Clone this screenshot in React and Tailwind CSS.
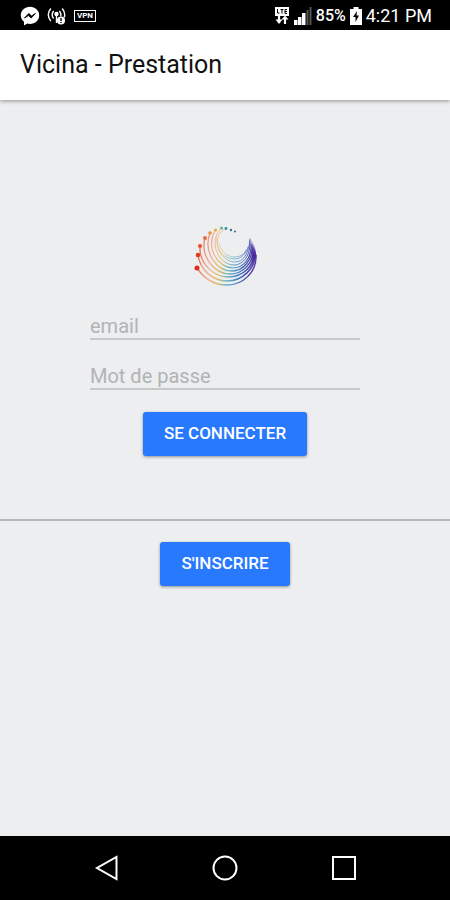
/**
 * Vicina - Prestation: login screen.
 */

// Each strand starts at a drop-shaped head and sweeps under the logo to the right.
const STRANDS = [
  { head: [12, 50, 2.5], d: 'M12 50 C20 62 30 67 42 67 C58 67 72 54 71 37', color: '#dc2f1c', width: 1.4 },
  { head: [13, 37, 2.3], d: 'M13 37 C15 52 28 63 42 63 C57 63 71 51 70 34', color: '#e03c22', width: 1.4 },
  { head: [15, 28, 2.1], d: 'M15 28 C14 45 28 59 43 59 C58 59 70 48 69 32', color: '#e5532f', width: 1.4 },
  { head: [20, 20, 2], d: 'M20 20 C15 38 29 56 45 56 C58 56 69 45 68 30', color: '#e86c3c', width: 1.3 },
  { head: [25, 15, 1.8], d: 'M25 15 C18 34 31 53 47 53 C58 53 68 42 67 28', color: '#ea903a', width: 1.3 },
  { head: [30.5, 12, 1.6], d: 'M30.5 12 C20 30 33 50 48 50 C58 50 67 40 66 26', color: '#ecac3e', width: 1.2 },
  { head: [36.5, 10, 1.5], d: 'M36.5 10 C22 24 34 47 49 47 C58 47 66 37 65 23', color: '#6fae90', width: 1 },
  { head: [41, 10.5, 1.4], d: 'M41 10.5 C24 18 34 44 50 44 C58 44 64 36 65 21', color: '#2f92a8', width: 0.8 },
  { head: [46, 12, 1.2], d: 'M32 20 C31 32 38 41 50 41 C56 41 62 35 63 29', color: '#2f7694', width: 0.7 },
  { head: [50, 13.5, 1], d: 'M34 25 C36 34 42 39 50 39 C56 39 60 35 61 32', color: '#36607c', width: 0.6 },
];

function Logo() {
  return (
    <svg width="80" height="76" viewBox="0 0 80 76" fill="none" role="img" aria-label="Vicina">
      <defs>
        <linearGradient id="strand" gradientUnits="userSpaceOnUse" x1="12" y1="34" x2="71" y2="44">
          <stop offset="0" stopColor="#e8643c" />
          <stop offset="0.12" stopColor="#ee8f78" />
          <stop offset="0.26" stopColor="#f2b394" />
          <stop offset="0.42" stopColor="#e6bd62" />
          <stop offset="0.56" stopColor="#6ab9bf" />
          <stop offset="0.72" stopColor="#4687c4" />
          <stop offset="0.9" stopColor="#4b3fa5" />
          <stop offset="1" stopColor="#5b2f9c" />
        </linearGradient>
        <linearGradient id="edge" gradientUnits="userSpaceOnUse" x1="64" y1="18" x2="62" y2="58">
          <stop offset="0" stopColor="#5b4fb0" stopOpacity="0" />
          <stop offset="0.5" stopColor="#47259c" />
          <stop offset="1" stopColor="#4a8fd0" stopOpacity="0" />
        </linearGradient>
      </defs>
      {STRANDS.map((strand) => (
        <g key={strand.d}>
          <path d={strand.d} stroke="url(#strand)" strokeWidth={strand.width} strokeLinecap="round" />
          <circle cx={strand.head[0]} cy={strand.head[1]} r={strand.head[2]} fill={strand.color} />
        </g>
      ))}
      <path d="M65 20 C73 31 74 44 62 57 C68 45 68 32 65 20Z" fill="url(#edge)" />
    </svg>
  );
}

function MessengerIcon() {
  return (
    <svg width="20" height="20" viewBox="0 0 20 20" aria-hidden="true">
      <path d="M10 .8C4.8.8.8 4.5.8 9.3c0 2.7 1.2 5 3.2 6.5V19.5l3.2-1.9c.9.2 1.8.4 2.800.4 5.2 0 9.2-3.8 9.2-8.7S15.2.8 10 .8Z" fill="#fff" />
      <path d="m4.5 12 4.3-4.6 2.7 2.5 4-2.5-4.3 4.7-2.7-2.5Z" fill="#000" stroke="#000" strokeWidth=".8" />
    </svg>
  );
}

function HotspotIcon() {
  return (
    <svg width="20" height="20" viewBox="0 0 20 20" fill="none" stroke="#fff" strokeWidth="1.4" aria-hidden="true">
      <path d="M3.8 2.5c-3.2 4-3.2 8.5 0 12.5M6.6 5c-1.9 2.5-1.9 5 0 7.5M15.2 2.5c2.5 3 3 6 2 9M12.4 5c1.4 1.8 1.8 3.5 1.3 5.3M9.5 9v8" />
      <circle cx="9.5" cy="8" r="1.5" fill="#fff" />
      <circle cx="14" cy="14.5" r="4" fill="#fff" stroke="none" />
      <path d="M14 12v3M14 16v1" stroke="#000" />
    </svg>
  );
}

function DataIcon() {
  return (
    <svg width="16" height="18" viewBox="0 0 16 18" aria-hidden="true">
      <path d="M1 0h14v9H1Z" fill="#fff" />
      <path d="M3.5 2v4h2M6.5 2.5h3M8 2.5V6.5M13 2.5h-2v4h2M11 4.5h2" stroke="#000" strokeWidth="1" fill="none" />
      <path d="M5 8v6M11 17v-6" stroke="#fff" strokeWidth="2.2" />
      <path d="M1.5 12.5h7L5 17ZM7.5 12.5 11 8.5l3.5 4Z" fill="#fff" />
    </svg>
  );
}

function SignalIcon() {
  return (
    <svg width="18" height="18" viewBox="0 0 18 18" aria-hidden="true">
      <path d="M0 13h3.500v5H0ZM4 10h3.500v8H4ZM8 6h3.500v12H8Z" fill="#fff" />
      <path d="M12.500 3h2v15h-2ZM15.500 0h2v18h-2Z" fill="#555" />
    </svg>
  );
}

function BatteryIcon() {
  return (
    <svg width="12" height="18" viewBox="0 0 12 18" aria-hidden="true">
      <path d="M3.5 0h5v2H12v16H0V2h3.5Z" fill="#fff" />
      <path d="M7 4 3 10h2.500v5L9 8.500H6.500Z" fill="#000" />
    </svg>
  );
}

function StatusBar() {
  return (
    <div className="flex h-[30px] items-center justify-between bg-black pt-0.5 pr-[18px] pl-5 text-white">
      <div className="flex items-center gap-[7px]">
        <MessengerIcon />
        <HotspotIcon />
        <span className="flex h-3 w-[22px] items-center justify-center border border-white text-[8px] leading-none font-bold">
          VPN
        </span>
      </div>
      <div className="flex items-center gap-1">
        <DataIcon />
        <SignalIcon />
        <span className="text-base font-medium">85%</span>
        <BatteryIcon />
        <span className="text-lg">4:21 PM</span>
      </div>
    </div>
  );
}

function Field({ id, label, type }) {
  return (
    <input
      id={id}
      type={type}
      aria-label={label}
      placeholder={label}
      className="h-[30px] w-full border-b-2 border-[#c6c7c9] bg-transparent pt-1 text-xl text-gray-800 outline-none placeholder:text-[#b2b3b5]"
    />
  );
}

function Button({ children, type = 'button' }) {
  return (
    <button
      type={type}
      className="h-11 rounded-[3px] bg-[#2979ff] px-[21px] text-[17px] font-medium text-white uppercase shadow-[0_1px_3px_rgba(0,0,0,0.4)]"
    >
      {children}
    </button>
  );
}

function NavBar() {
  return (
    <nav className="flex h-16 items-center justify-center gap-[93px] bg-black">
      <button type="button" aria-label="Back">
        <svg className="block" width="26" height="26" viewBox="0 0 26 26" fill="none" stroke="#fff" strokeWidth="2">
          <path d="M23.5 2v22L4 13Z" />
        </svg>
      </button>
      <button type="button" aria-label="Home">
        <svg className="block" width="26" height="26" viewBox="0 0 26 26" fill="none" stroke="#fff" strokeWidth="2">
          <circle cx="13" cy="13" r="11.5" />
        </svg>
      </button>
      <button type="button" aria-label="Recent apps">
        <svg className="block" width="26" height="26" viewBox="0 0 26 26" fill="none" stroke="#fff" strokeWidth="2">
          <path d="M2 2h22v22H2Z" />
        </svg>
      </button>
    </nav>
  );
}

export default function App() {
  return (
    <div className="flex min-h-screen flex-col bg-[#eceef0] font-['Roboto',sans-serif]">
      <StatusBar />
      <header className="flex h-[70px] items-center bg-white px-5 shadow-[0_1px_4px_rgba(0,0,0,0.4)]">
        <h1 className="text-[25px] text-[#111]">Vicina - Prestation</h1>
      </header>
      <main className="flex grow flex-col items-center pt-[118px]">
        <Logo />
        <form className="mt-4 flex w-3/5 flex-col items-center">
          <Field id="email" label="email" type="email" />
          <div className="mt-5 mb-[22px] w-full">
            <Field id="password" label="Mot de passe" type="password" />
          </div>
          <Button type="submit">Se connecter</Button>
        </form>
        <hr className="mt-[63px] mb-[21px] w-full border-t-2 border-[#b6b7b9]" />
        <Button>S'inscrire</Button>
      </main>
      <NavBar />
    </div>
  );
}
